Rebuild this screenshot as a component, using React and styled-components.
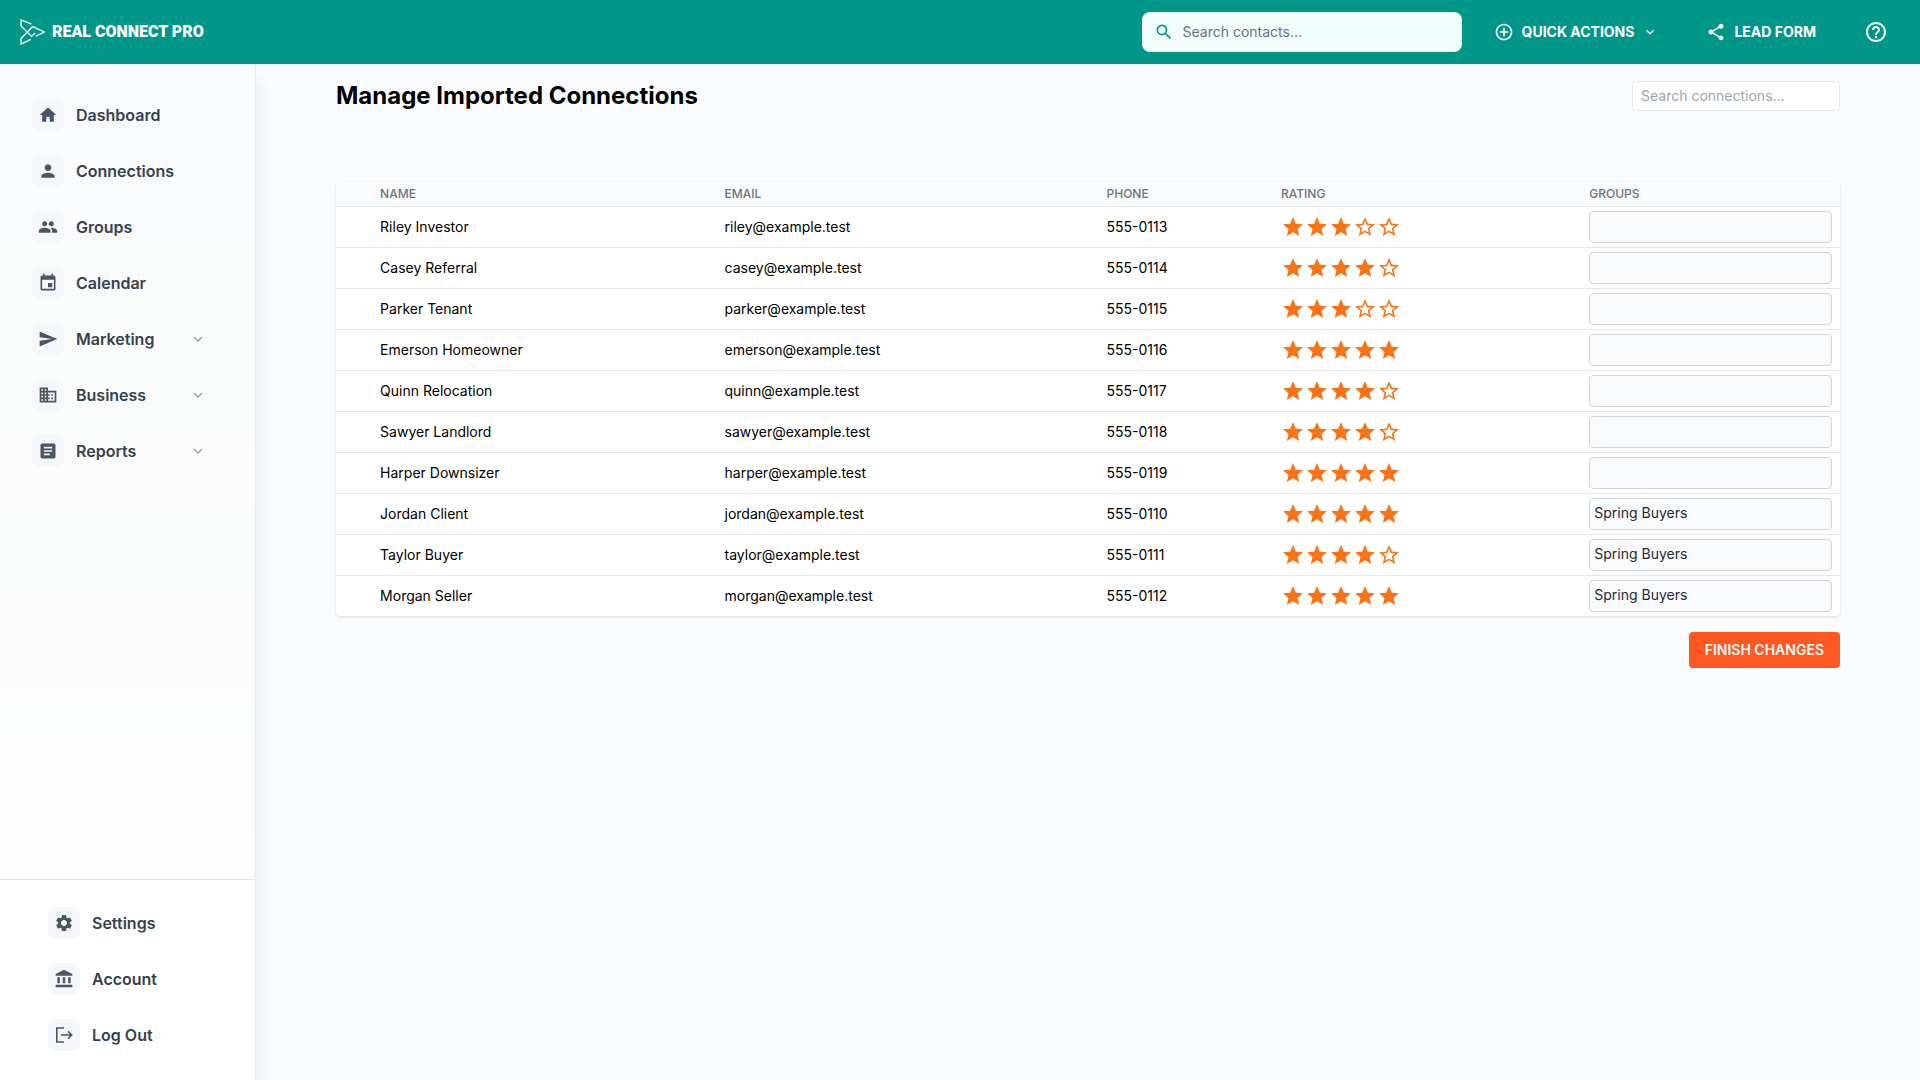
import { useState } from 'react';
import styled, { createGlobalStyle } from 'styled-components';
import {
  MdHome,
  MdPerson,
  MdGroup,
  MdEvent,
  MdSend,
  MdBusiness,
  MdArticle,
  MdSettings,
  MdAccountBalance,
  MdSearch,
  MdShare,
  MdHelpOutline,
  MdAddCircleOutline,
  MdExpandMore,
  MdStar,
  MdStarBorder,
} from 'react-icons/md';

const mainLinks = [
  { title: 'Dashboard', Icon: MdHome },
  { title: 'Connections', Icon: MdPerson },
  { title: 'Groups', Icon: MdGroup },
  { title: 'Calendar', Icon: MdEvent },
  { title: 'Marketing', Icon: MdSend, hasMenu: true },
  { title: 'Business', Icon: MdBusiness, hasMenu: true },
  { title: 'Reports', Icon: MdArticle, hasMenu: true },
];

const LogoutIcon = () => (
  <svg
    width="20"
    height="20"
    viewBox="0 0 20 20"
    fill="none"
    stroke="currentColor"
    strokeWidth="1.6"
    aria-hidden="true"
  >
    <path d="M10 3H2.8v14H10" />
    <path d="M7 10h10.5M14 6.4l3.6 3.6-3.6 3.6" />
  </svg>
);

const accountLinks = [
  { title: 'Settings', Icon: MdSettings },
  { title: 'Account', Icon: MdAccountBalance },
  { title: 'Log Out', Icon: LogoutIcon },
];

const connections = [
  { name: 'Riley Investor', email: 'riley@example.test', phone: '555-0113', rating: 3, group: '' },
  { name: 'Casey Referral', email: 'casey@example.test', phone: '555-0114', rating: 4, group: '' },
  { name: 'Parker Tenant', email: 'parker@example.test', phone: '555-0115', rating: 3, group: '' },
  { name: 'Emerson Homeowner', email: 'emerson@example.test', phone: '555-0116', rating: 5, group: '' },
  { name: 'Quinn Relocation', email: 'quinn@example.test', phone: '555-0117', rating: 4, group: '' },
  { name: 'Sawyer Landlord', email: 'sawyer@example.test', phone: '555-0118', rating: 4, group: '' },
  { name: 'Harper Downsizer', email: 'harper@example.test', phone: '555-0119', rating: 5, group: '' },
  { name: 'Jordan Client', email: 'jordan@example.test', phone: '555-0110', rating: 5, group: 'Spring Buyers' },
  { name: 'Taylor Buyer', email: 'taylor@example.test', phone: '555-0111', rating: 4, group: 'Spring Buyers' },
  { name: 'Morgan Seller', email: 'morgan@example.test', phone: '555-0112', rating: 5, group: 'Spring Buyers' },
];

const Logo = () => (
  <svg width="26" height="26" viewBox="0 0 26 26" fill="none" stroke="#fff" strokeWidth="1.3" aria-hidden="true">
    <path d="M11.4 5.2 1 .9v6L11.6 17.4l3.6-3.3" />
    <path d="M10.8 20.4 1 25.1v-5.6L12.6 7.6 24.4 13l-8.6 4.2" />
  </svg>
);

const NavItem = ({ title, Icon, hasMenu }) => (
  <NavLink href="#">
    <NavIcon>
      <Icon size={20} />
    </NavIcon>
    <NavTitle>{title}</NavTitle>
    {hasMenu && <MdExpandMore size={18} color="#9ca3af" />}
  </NavLink>
);

const Rating = ({ name, initial }) => {
  const [rating, setRating] = useState(initial);
  return (
    <Stars role="group" aria-label={`Rating for ${name}`}>
      {[1, 2, 3, 4, 5].map((n) => (
        <StarButton
          key={n}
          type="button"
          aria-label={`${n} stars`}
          onClick={() => setRating(n)}
        >
          {n <= rating ? <MdStar size={24} /> : <MdStarBorder size={24} />}
        </StarButton>
      ))}
    </Stars>
  );
};

const App = () => {
  return (
    <Page>
      <GlobalStyle />
      <Header>
        <Brand href="#">
          <Logo />
          REAL CONNECT PRO
        </Brand>
        <HeaderSearch>
          <MdSearch size={20} color="#009688" />
          <HeaderInput
            type="search"
            placeholder="Search contacts..."
            aria-label="Search contacts"
          />
        </HeaderSearch>
        <HeaderButton type="button">
          <MdAddCircleOutline size={20} />
          QUICK ACTIONS
          <MdExpandMore size={16} />
        </HeaderButton>
        <HeaderButton type="button">
          <MdShare size={20} />
          LEAD FORM
        </HeaderButton>
        <HelpButton type="button" aria-label="Help">
          <MdHelpOutline size={24} />
        </HelpButton>
      </Header>
      <Body>
        <Sidebar>
          <MainNav aria-label="Main">
            {mainLinks.map((link) => (
              <NavItem key={link.title} {...link} />
            ))}
          </MainNav>
          <AccountNav aria-label="Account">
            {accountLinks.map((link) => (
              <NavItem key={link.title} {...link} />
            ))}
          </AccountNav>
        </Sidebar>
        <Main>
          <TitleRow>
            <Title>Manage Imported Connections</Title>
            <ConnectionSearch
              type="search"
              placeholder="Search connections..."
              aria-label="Search connections"
            />
          </TitleRow>
          <Table>
            <colgroup>
              <Col $width="2.4%" />
              <Col $width="22.9%" />
              <Col $width="25.4%" />
              <Col $width="11.6%" />
              <Col $width="20.5%" />
              <Col $width="17.2%" />
            </colgroup>
            <thead>
              <tr>
                <HeadCell aria-label="Row" />
                <HeadCell>NAME</HeadCell>
                <HeadCell>EMAIL</HeadCell>
                <HeadCell>PHONE</HeadCell>
                <HeadCell>RATING</HeadCell>
                <HeadCell>GROUPS</HeadCell>
              </tr>
            </thead>
            <tbody>
              {connections.map(({ name, email, phone, rating, group }) => (
                <Row key={email}>
                  <Cell />
                  <Cell>{name}</Cell>
                  <Cell>{email}</Cell>
                  <Cell>{phone}</Cell>
                  <Cell>
                    <Rating name={name} initial={rating} />
                  </Cell>
                  <Cell>
                    <GroupInput
                      type="text"
                      defaultValue={group}
                      aria-label={`Groups for ${name}`}
                    />
                  </Cell>
                </Row>
              ))}
            </tbody>
          </Table>
          <FinishButton type="button">FINISH CHANGES</FinishButton>
        </Main>
      </Body>
    </Page>
  );
};

export default App;

const GlobalStyle = createGlobalStyle`
  * {
    box-sizing: border-box;
  }
  body {
    margin: 0;
    background-color: #fafbfd;
    color: #000;
    font-family: Inter, 'Liberation Sans', sans-serif;
    font-size: 14px;
    line-height: 20px;
  }
  button,
  input {
    font: inherit;
    color: inherit;
  }
  button {
    cursor: pointer;
  }
  svg {
    display: block;
    flex-shrink: 0;
  }
`;
const Page = styled.div`
  display: flex;
  flex-direction: column;
  min-height: 100vh;
`;
const Header = styled.header`
  display: flex;
  align-items: center;
  height: 64px;
  padding: 0 32px 0 20px;
  background-color: #009688;
  color: #fff;
`;
const Brand = styled.a`
  display: flex;
  align-items: center;
  gap: 6px;
  margin-right: auto;
  color: #fff;
  font-family: Roboto, sans-serif;
  font-size: 16px;
  font-weight: 900;
  text-decoration: none;
`;
const HeaderSearch = styled.label`
  display: flex;
  align-items: center;
  gap: 9px;
  width: 320px;
  height: 40px;
  margin-right: 16px;
  padding: 0 12px;
  border-radius: 8px;
  background-color: #f2fcfa;
`;
const HeaderInput = styled.input`
  flex: 1;
  min-width: 0;
  padding: 0;
  border: 0;
  outline: 0;
  background: transparent;
  color: #111827;

  &::placeholder {
    color: #6b7280;
  }
`;
const HeaderButton = styled.button`
  display: flex;
  align-items: center;
  gap: 8px;
  margin-right: 16px;
  padding: 8px 16px;
  border: 0;
  background: transparent;
  font-weight: 700;
`;
const HelpButton = styled.button`
  margin-left: 16px;
  padding: 0;
  border: 0;
  background: transparent;
`;
const Body = styled.div`
  display: flex;
  flex: 1;
`;
const Sidebar = styled.aside`
  display: flex;
  flex-direction: column;
  justify-content: space-between;
  flex-shrink: 0;
  width: 256px;
  border-right: 1px solid #e8eaee;
  background: linear-gradient(#fafbfe, #fafbfb 25%, #fff);
  box-shadow: 4px 16px 16px rgba(15, 23, 42, 0.06);
`;
const MainNav = styled.nav`
  display: flex;
  flex-direction: column;
  gap: 8px;
  padding: 27px 32px;
`;
const AccountNav = styled.nav`
  display: flex;
  flex-direction: column;
  gap: 8px;
  padding: 19px 48px 21px;
  border-top: 1px solid #e2e4e8;
  background-color: #fff;
`;
const NavLink = styled.a`
  display: flex;
  align-items: center;
  gap: 12px;
  height: 48px;
  padding-right: 16px;
  color: #374151;
  font-size: 16px;
  font-weight: 600;
  line-height: 24px;
  text-decoration: none;
`;
const NavIcon = styled.span`
  display: flex;
  align-items: center;
  justify-content: center;
  width: 32px;
  height: 32px;
  border-radius: 8px;
  background-color: #f5f7fa;
  color: #4b5563;
`;
const NavTitle = styled.span`
  flex: 1;
  white-space: nowrap;
`;
const Main = styled.main`
  flex: 1;
  min-width: 0;
  padding: 16px 80px;
`;
const TitleRow = styled.div`
  display: flex;
  align-items: center;
  justify-content: space-between;
  margin-bottom: 70px;
`;
const Title = styled.h1`
  margin: 0;
  font-size: 24px;
  font-weight: 700;
  line-height: 32px;
`;
const ConnectionSearch = styled.input`
  width: 208px;
  height: 30px;
  padding: 0 8px 2px;
  border: 1px solid #e5e7eb;
  border-radius: 4px;
  background-color: #fff;

  &::placeholder {
    color: #9ca3af;
  }
`;
const Table = styled.table`
  width: 100%;
  table-layout: fixed;
  border-spacing: 0;
  border-radius: 4px;
  background-color: #fff;
  box-shadow: 0 1px 3px rgba(0, 0, 0, 0.15);
`;
const Col = styled.col`
  width: ${({ $width }) => $width};
`;
const HeadCell = styled.th`
  height: 25px;
  padding: 0 8px;
  border-bottom: 1px solid #e5e7eb;
  background-color: #fafbfd;
  color: #6b7280;
  font-size: 12px;
  font-weight: 500;
  line-height: 16px;
  text-align: left;
`;
const Cell = styled.td`
  height: 41px;
  padding: 0 8px;
  border-bottom: 1px solid #e5e7eb;
`;
const Row = styled.tr`
  &:last-child ${Cell} {
    height: 40px;
    border-bottom: 0;
  }
`;
const Stars = styled.div`
  display: flex;
  color: #f97316;
`;
const StarButton = styled.button`
  padding: 0;
  border: 0;
  background: transparent;
`;
const GroupInput = styled.input`
  display: block;
  width: 100%;
  height: 32px;
  padding: 0 4px 3px;
  border: 1px solid #d1d5db;
  border-radius: 4px;
  background-color: #f9fafc;
  color: #1f2937;
`;
const FinishButton = styled.button`
  display: block;
  margin: 16px 0 0 auto;
  padding: 8px 16px;
  border: 0;
  border-radius: 4px;
  background-color: #ff5722;
  color: #fff;
  font-weight: 600;
`;
